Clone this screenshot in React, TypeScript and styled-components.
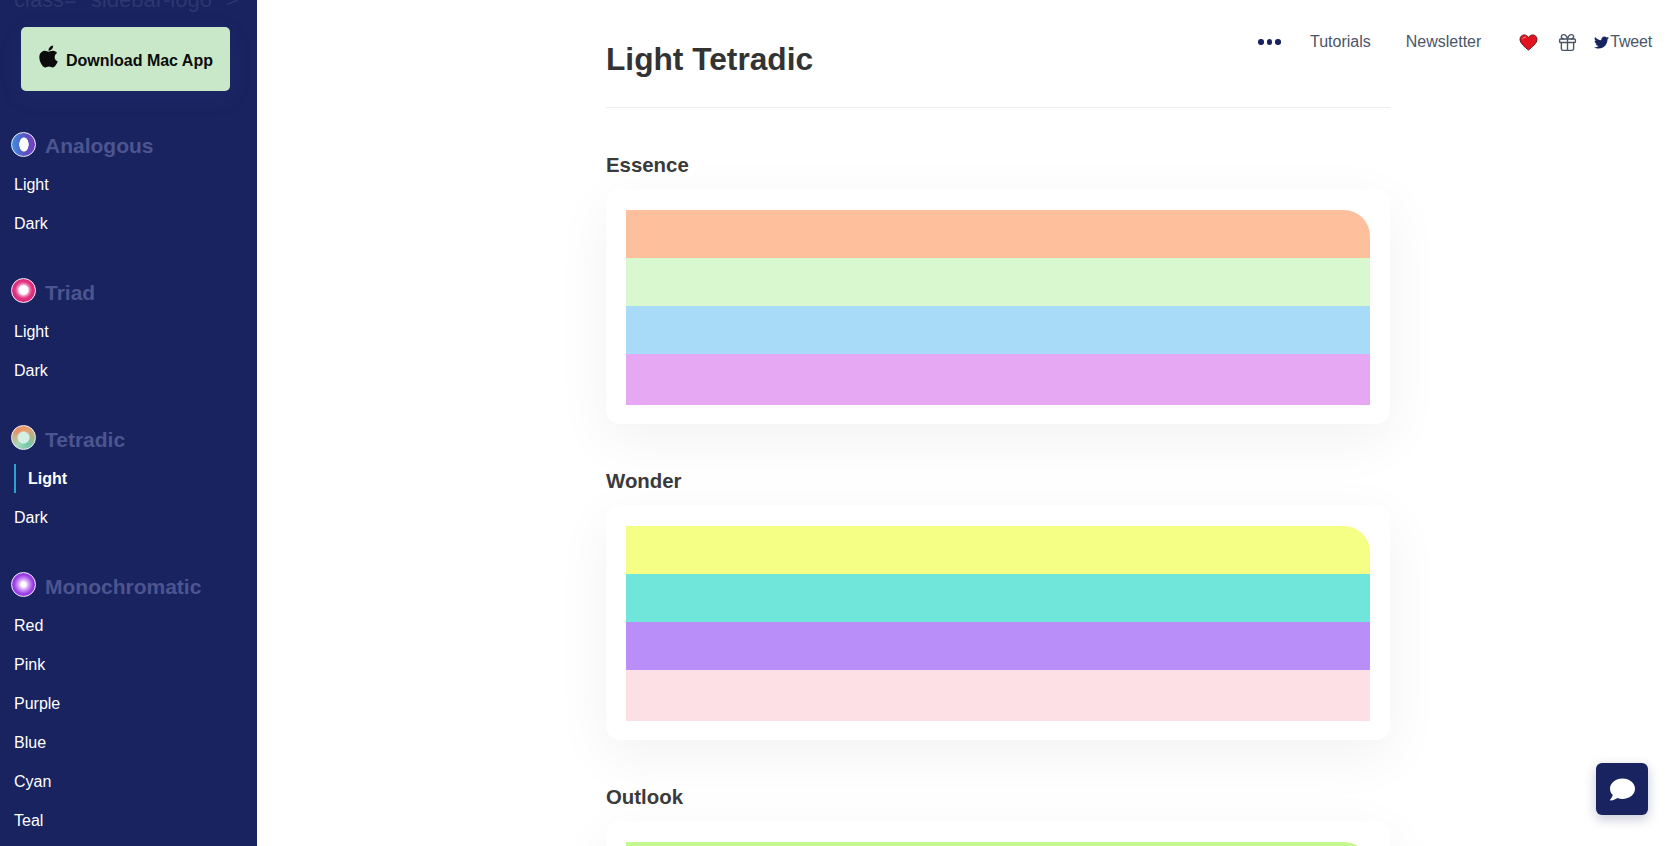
import React from "react";
import styled, { createGlobalStyle } from "styled-components";
import { FaApple, FaTwitter, FaComment } from "react-icons/fa";
import { Gift } from "lucide-react";

const Global = createGlobalStyle`
  html, body { margin: 0; padding: 0; height: 100%; overflow: hidden; background: #fff; }
  body { font-family: "Liberation Sans", Arial, sans-serif; }
  * { box-sizing: border-box; }
`;

const Page = styled.div`
  display: grid;
  grid-template-columns: 257px 1fr;
  height: 846px;
  overflow: hidden;
  position: relative;
`;

const Sidebar = styled.aside`
  background: #19235f;
  height: 846px;
  overflow: hidden;
  padding: 0 0 0 14px;
`;

const StrayText = styled.div`
  margin: -14px 0 0 0;
  height: 41px;
  line-height: 27px;
  font-size: 22px;
  white-space: nowrap;
  color: rgba(255, 255, 255, 0.1);
`;

const DownloadButton = styled.a`
  display: flex;
  align-items: center;
  gap: 5px;
  width: 209px;
  height: 64px;
  margin: 0 0 41px 7px;
  padding: 0 0 0 15px;
  background: #c9e8c9;
  border-radius: 5px;
  color: #0b0b0b;
  font-weight: 700;
  font-size: 16px;
  box-shadow: 0 6px 24px rgba(80, 100, 200, 0.1);
  svg { margin-top: -5px; flex: none; }
  span { margin-top: 4px; }
`;

const Section = styled.section`
  margin-bottom: 35.6px;
  margin-left: -3px;
`;

const SectionHead = styled.div`
  display: flex;
  align-items: center;
  gap: 9px;
  height: 28px;
  margin-bottom: 5px;
  color: #4c5590;
  font-weight: 700;
  font-size: 21px;
`;

const Ring = styled.span<{ $bg: string }>`
  display: block;
  width: 25px;
  height: 25px;
  margin-top: -4px;
  border-radius: 50%;
  border: 1.5px solid #f4eefc;
  background: ${(p) => p.$bg};
  flex: none;
`;

const NavLink = styled.a<{ $active?: boolean }>`
  display: flex;
  align-items: center;
  height: 39.2px;
  margin-left: 3px;
  color: #fff;
  font-size: 16px;
  font-weight: ${(p) => (p.$active ? 700 : 400)};
  &::before {
    content: "";
    display: ${(p) => (p.$active ? "block" : "none")};
    width: 2px;
    height: 29px;
    margin-right: 12px;
    background: #2aa3cf;
  }
`;

const Main = styled.main`
  padding: 0 0 0 349px;
  position: relative;
`;

const Column = styled.div`
  width: 784px;
`;

const Title = styled.h1`
  margin: 0;
  height: 108px;
  padding-top: 39px;
  line-height: 40px;
  font-size: 31.7px;
  font-weight: 700;
  color: #333;
  border-bottom: 1px solid #eeeeee;
`;

const PaletteBlock = styled.section`
  padding-top: 45px;
`;

const PaletteName = styled.h2`
  margin: 0 0 12px;
  line-height: 24px;
  height: 24px;
  font-size: 20.4px;
  font-weight: 700;
  color: #3a3a3a;
`;

const Card = styled.div`
  background: #fff;
  border-radius: 14px;
  padding: 21px 20px 19px 20px;
  box-shadow: 0 16px 56px rgba(0, 0, 0, 0.055);
`;

const Swatches = styled.div`
  display: flex;
  flex-direction: column;
  height: 195px;
  overflow: hidden;
  border-radius: 0 26px 0 0;
`;

const Swatch = styled.div<{ $c: string }>`
  flex: 1;
  background: ${(p) => p.$c};
  &:last-child { flex: 1.05; }
`;

const TopNav = styled.nav`
  position: absolute;
  top: 30px;
  right: 28px;
  display: flex;
  align-items: center;
  height: 24px;
  color: #4a5568;
  font-size: 16px;
`;

const Dots = styled.span`
  display: flex;
  gap: 3px;
  margin-right: 29px;
  i { display: block; width: 5.5px; height: 5.5px; border-radius: 50%; background: #19235f; }
`;

const TopLink = styled.a<{ $gap: number }>`
  margin-right: ${(p) => p.$gap}px;
`;

const IconSlot = styled.span<{ $gap: number }>`
  display: flex;
  margin-right: ${(p) => p.$gap}px;
`;

const Tweet = styled.a`
  display: flex;
  align-items: center;
  gap: 1px;
  letter-spacing: -0.2px;
  svg { color: #19235f; }
`;

const ChatButton = styled.button`
  position: absolute;
  right: 32px;
  bottom: 31px;
  width: 52px;
  height: 52px;
  border: 0;
  border-radius: 6px;
  background: #19235f;
  color: #fff;
  display: flex;
  align-items: center;
  justify-content: center;
  box-shadow: 0 4px 12px rgba(25, 35, 95, 0.25);
`;

const groups = [
  {
    name: "Analogous",
    bg: "radial-gradient(ellipse 5px 7.5px at 52% 50%, #fff 88%, transparent 100%), linear-gradient(90deg, #3c8fe0, #5b4fc0 60%, #7a3fc4)",
    items: ["Light", "Dark"],
  },
  {
    name: "Triad",
    bg: "radial-gradient(circle at 50% 48%, #fff 26%, #f08ab8 36%, #e0307f 52%, #d81f6c)",
    items: ["Light", "Dark"],
  },
  {
    name: "Tetradic",
    bg: "radial-gradient(circle at 50% 50%, #d4efe6 32%, transparent 42%), conic-gradient(from 20deg, #e8a070, #70c8a8 130deg, #a8d8b8 200deg, #e89060 300deg, #e8a070)",
    items: ["Light", "Dark"],
    active: "Light",
  },
  {
    name: "Monochromatic",
    bg: "radial-gradient(circle at 50% 50%, #fff 14%, #d9a8f8 30%, #9a3fe6 58%, #8a2fd8)",
    items: ["Red", "Pink", "Purple", "Blue", "Cyan", "Teal"],
  },
];

const palettes = [
  { name: "Essence", colors: ["#fdbf9c", "#d9f8d0", "#a8dbf8", "#e6a8f3"] },
  { name: "Wonder", colors: ["#f5ff85", "#6fe6d9", "#b98ef8", "#fde0e5"] },
  { name: "Outlook", colors: ["#c4f78f", "#ffffff", "#ffffff", "#ffffff"] },
];

const Heart = () => (
  <svg width="19" height="17" viewBox="0 0 20 18">
    <path
      d="M10 17 C6 13.5 1 10 1 5.6 C1 2.8 3.1 1 5.5 1 C7.4 1 9 2 10 3.6 C11 2 12.6 1 14.5 1 C16.9 1 19 2.8 19 5.6 C19 10 14 13.5 10 17 Z"
      fill="#e2121f"
      stroke="#5a1015"
      strokeWidth="1"
    />
    <path d="M4 5 C4.5 3.8 5.5 3.2 7 3.4" fill="none" stroke="#f76a6a" strokeWidth="1.3" strokeLinecap="round" />
  </svg>
);

export default function App() {
  return (
    <>
      <Global />
      <Page>
        <Sidebar>
          <StrayText>{'class=" sidebar-logo" >'}</StrayText>
          <DownloadButton>
            <FaApple size={25} />
            <span>Download Mac App</span>
          </DownloadButton>
          {groups.map((g) => (
            <Section key={g.name}>
              <SectionHead>
                <Ring $bg={g.bg} />
                <span>{g.name}</span>
              </SectionHead>
              {g.items.map((i) => (
                <NavLink key={i} $active={g.active === i}>
                  {i}
                </NavLink>
              ))}
            </Section>
          ))}
        </Sidebar>
        <Main>
          <Column>
            <Title>Light Tetradic</Title>
            {palettes.map((p) => (
              <PaletteBlock key={p.name}>
                <PaletteName>{p.name}</PaletteName>
                <Card>
                  <Swatches>
                    {p.colors.map((c, i) => (
                      <Swatch key={i} $c={c} />
                    ))}
                  </Swatches>
                </Card>
              </PaletteBlock>
            ))}
          </Column>
          <TopNav>
            <Dots>
              <i />
              <i />
              <i />
            </Dots>
            <TopLink $gap={35}>Tutorials</TopLink>
            <TopLink $gap={38}>Newsletter</TopLink>
            <IconSlot $gap={19}>
              <Heart />
            </IconSlot>
            <IconSlot $gap={16}>
              <Gift size={21} strokeWidth={1.6} />
            </IconSlot>
            <Tweet>
              <FaTwitter size={15} />
              <span>Tweet</span>
            </Tweet>
          </TopNav>
        </Main>
        <ChatButton aria-label="Chat">
          <FaComment size={25} />
        </ChatButton>
      </Page>
    </>
  );
}
